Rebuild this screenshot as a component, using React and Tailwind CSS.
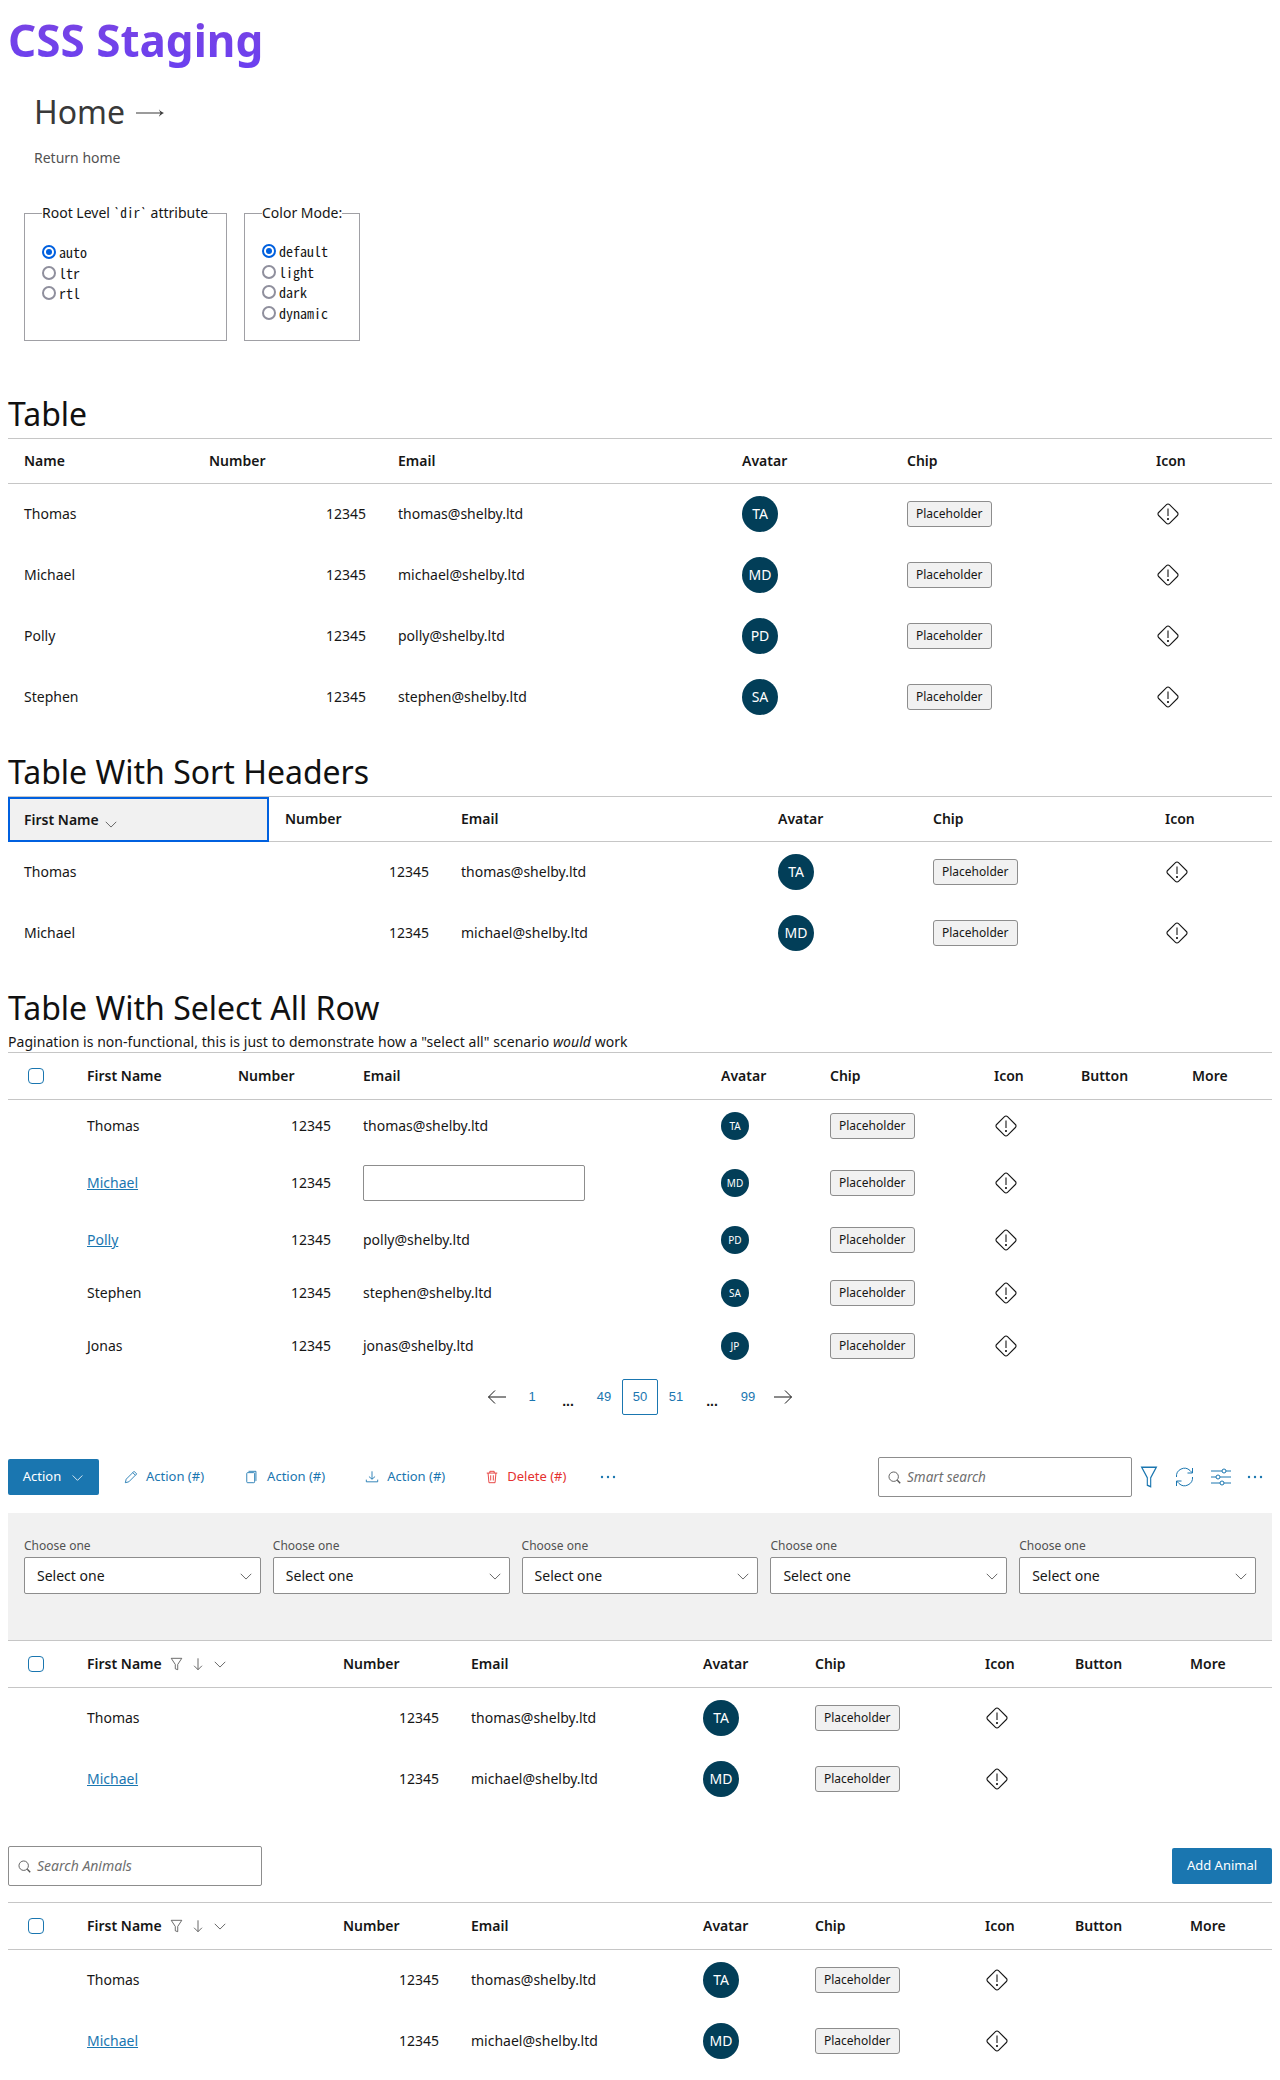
import React from 'react';

const ROWS = [
  { name: 'Thomas', email: 'thomas@shelby.ltd', init: 'TA' },
  { name: 'Michael', email: 'michael@shelby.ltd', init: 'MD' },
  { name: 'Polly', email: 'polly@shelby.ltd', init: 'PD' },
  { name: 'Stephen', email: 'stephen@shelby.ltd', init: 'SA' },
  { name: 'Jonas', email: 'jonas@shelby.ltd', init: 'JP' },
];

function Diamond() {
  return (
    <svg width="22" height="22" viewBox="0 0 22 22" fill="none" stroke="#161616" strokeWidth="1.1" className="block ml-[1px]">
      <path d="M9.5 1.6a2.1 2.1 0 0 1 3 0l7.9 7.9a2.1 2.1 0 0 1 0 3l-7.9 7.9a2.1 2.1 0 0 1-3 0l-7.9-7.9a2.1 2.1 0 0 1 0-3z" />
      <path d="M11 5.5v7.5" />
      <circle cx="11" cy="16" r="0.5" fill="#161616" />
    </svg>
  );
}

function Avatar({ init, small }) {
  return small ? (
    <div className="w-7 h-7 rounded-full bg-[#023e58] text-white text-[10px] flex items-center justify-center">{init}</div>
  ) : (
    <div className="w-9 h-9 rounded-full bg-[#023e58] text-white text-sm flex items-center justify-center">{init}</div>
  );
}

function Chip() {
  return (
    <span className="inline-flex items-center h-[26px] px-2 rounded-[3px] border border-[#8d8d8d] bg-[#f1f1f1] text-xs text-[#161616]">Placeholder</span>
  );
}

function Checkbox() {
  return <div className="w-4 h-4 rounded-[4px] border border-[#1a76b0] bg-white" />;
}

function Chevron({ size = 14, color = '#525252' }) {
  return (
    <svg width={size} height={size} viewBox="0 0 16 16" fill="none" stroke={color} strokeWidth="1" className="inline-block">
      <path d="M2 5.5 8 11.5l6-6" />
    </svg>
  );
}

function Funnel({ width = 14, height = 14, color = '#525252' }) {
  return (
    <svg width={width} height={height} viewBox="0 0 16 16" preserveAspectRatio="none" fill="none" stroke={color} strokeWidth="1" className="inline-block">
      <path d="M1.5 1.5h13L9.5 8.5v6l-3-1V8.5z" />
    </svg>
  );
}

function SearchIcon() {
  return (
    <svg width="13" height="13" viewBox="0 0 16 16" fill="none" stroke="#525252" strokeWidth="1.1" className="shrink-0">
      <circle cx="7" cy="7" r="5.8" />
      <path d="M11.5 11.5l3.5 3.5" strokeWidth="1.7" />
    </svg>
  );
}

function Th({ children, className = 'h-[45px]' }) {
  return <th className={`px-4 text-left text-sm font-semibold text-[#161616] border-b border-[#c6c6c6] ${className}`}>{children}</th>;
}

function Heading({ children }) {
  return <h2 className="text-[32px] leading-[40px] pb-1 text-[#111]">{children}</h2>;
}

function Cell({ children, className = '' }) {
  return <td className={`px-4 pb-[1px] ${className}`}>{children}</td>;
}

function BasicTable({ rows, widths, sort }) {
  return (
    <table className="w-full table-fixed border-t border-[#c6c6c6] border-separate border-spacing-0 text-sm text-[#161616]">
      <colgroup>
        {widths.map((w, i) => <col key={i} style={{ width: w }} />)}
      </colgroup>
      <thead>
        <tr>
          {sort ? (
            <th className="h-[45px] pl-[14px] pr-4 text-left text-sm font-semibold bg-[#f1f1f1] border-2 border-[#0060df]">
              First Name <span className="ml-0.5 relative top-[3px]"><Chevron size={14} /></span>
            </th>
          ) : <Th>Name</Th>}
          <Th>Number</Th>
          <Th>Email</Th>
          <Th>Avatar</Th>
          <Th>Chip</Th>
          <Th>Icon</Th>
        </tr>
      </thead>
      <tbody>
        {rows.map(r => (
          <tr key={r.name} className="h-[61px]">
            <Cell>{r.name}</Cell>
            <Cell className="text-right">12345</Cell>
            <Cell>{r.email}</Cell>
            <Cell><Avatar init={r.init} /></Cell>
            <Cell><Chip /></Cell>
            <Cell><Diamond /></Cell>
          </tr>
        ))}
      </tbody>
    </table>
  );
}

function SelectTable({ widths, rows, filterHead }) {
  return (
    <table className="w-full table-fixed border-t border-[#c6c6c6] border-separate border-spacing-0 text-sm text-[#161616]">
      <colgroup>
        {widths.map((w, i) => <col key={i} style={{ width: w }} />)}
      </colgroup>
      <thead>
        <tr>
          <th className="h-[47px] pl-[20px] border-b border-[#c6c6c6]"><Checkbox /></th>
          <Th className="h-[47px]">
            First Name
            {filterHead && (
              <span className="inline-flex items-center gap-2 ml-2 relative top-[2px]">
                <Funnel width={13} height={14} />
                <svg width="14" height="14" viewBox="0 0 16 16" fill="none" stroke="#525252" strokeWidth="1">
                  <path d="M8 1.5v13M3.5 10 8 14.5 12.5 10" />
                </svg>
                <Chevron size={14} />
              </span>
            )}
          </Th>
          <Th className="h-[47px]">Number</Th>
          <Th className="h-[47px]">Email</Th>
          <Th className="h-[47px]">Avatar</Th>
          <Th className="h-[47px]">Chip</Th>
          <Th className="h-[47px]">Icon</Th>
          <Th className="h-[47px]">Button</Th>
          <Th className="h-[47px]">More</Th>
        </tr>
      </thead>
      <tbody>
        {rows}
      </tbody>
    </table>
  );
}

function LargeRows() {
  return ROWS.slice(0, 2).map((r, i) => (
    <tr key={r.name} className="h-[61px]">
      <td />
      <Cell>{i === 1 ? <a className="text-[#1a76b0] underline">{r.name}</a> : r.name}</Cell>
      <Cell className="text-right">12345</Cell>
      <Cell>{r.email}</Cell>
      <Cell><Avatar init={r.init} /></Cell>
      <Cell><Chip /></Cell>
      <Cell><Diamond /></Cell>
      <Cell />
      <Cell />
    </tr>
  ));
}

const PAGES = ['1', '…', '49', '50', '51', '…', '99'];

function Pagination() {
  return (
    <div className="flex justify-center items-center h-9 font-['Liberation_Sans',sans-serif] text-[13px] text-[#1a76b0] mt-[6px]">
      <svg width="20" height="20" viewBox="0 0 20 20" fill="none" stroke="#161616" strokeWidth="1" className="mr-[7px]">
        <path d="M19 10H1.5M8 3.5 1.5 10 8 16.5" />
      </svg>
      {PAGES.map((p, i) => p === '…' ? (
        <span key={i} className="w-9 text-center text-[#161616] font-bold text-sm relative top-[4px]">...</span>
      ) : (
        <span key={i} className={`w-9 h-9 flex items-center justify-center ${p === '50' ? 'border border-[#1a76b0] rounded-[2px]' : ''}`}>{p}</span>
      ))}
      <svg width="20" height="20" viewBox="0 0 20 20" fill="none" stroke="#161616" strokeWidth="1" className="ml-[7px]">
        <path d="M1 10h17.5M12 3.5 18.5 10 12 16.5" />
      </svg>
    </div>
  );
}

function ActionBtn({ icon, label, danger, className = '' }) {
  return (
    <span className={`inline-flex items-center gap-2 text-[13px] ${danger ? 'text-[#e5312f]' : 'text-[#1a76b0]'} ${className}`}>
      {icon}{label}
    </span>
  );
}

function Dots({ className = '' }) {
  return (
    <svg width="16" height="4" viewBox="0 0 16 4" fill="#1a76b0" className={className}>
      <circle cx="2" cy="2" r="1.2" /><circle cx="8" cy="2" r="1.2" /><circle cx="14" cy="2" r="1.2" />
    </svg>
  );
}

function Toolbar() {
  return (
    <div className="flex items-center h-9 mt-[44px]">
      <div className="w-[91px] h-9 rounded-[2px] bg-[#1a76b0] text-white text-[13px] flex items-center justify-center gap-[10px]">
        Action <Chevron size={13} color="#fff" />
      </div>
      <ActionBtn className="ml-[25px]" label="Action (#)" icon={
        <svg width="14" height="14" viewBox="0 0 16 16" fill="none" stroke="#1a76b0" strokeWidth="1"><path d="M1.5 14.5l1-4L11.5 1.5l3 3-9 9zM10 3l3 3" /></svg>
      } />
      <ActionBtn className="ml-[41px]" label="Action (#)" icon={
        <svg width="14" height="14" viewBox="0 0 16 16" fill="none" stroke="#1a76b0" strokeWidth="1"><rect x="2" y="3" width="9" height="11.5" rx="1" /><path d="M4 1.5h8.5v11" /></svg>
      } />
      <ActionBtn className="ml-[40px]" label="Action (#)" icon={
        <svg width="14" height="14" viewBox="0 0 16 16" fill="none" stroke="#1a76b0" strokeWidth="1"><path d="M8 1.5v9M4.5 7.5 8 10.5l3.5-3M1.5 11v2.5h13V11" /></svg>
      } />
      <ActionBtn className="ml-[40px]" danger label="Delete (#)" icon={
        <svg width="14" height="14" viewBox="0 0 16 16" fill="none" stroke="#e5312f" strokeWidth="1"><path d="M2 3.5h12M5.5 3.5V1.5h5v2M3.5 3.5l1 11h7l1-11M6.5 6v6M9.5 6v6" /></svg>
      } />
      <Dots className="ml-[34px]" />
      <div className="ml-auto flex items-center gap-4 pr-[9px]">
        <div className="w-[254px] h-[40px] border border-[#8d8d8d] rounded-[2px] flex items-center gap-[6px] px-[9px] text-[13.5px] italic text-[#6f6f6f]">
          <SearchIcon /> Smart search
        </div>
        <span className="-ml-[8px] flex"><Funnel width={18} height={24} color="#1a76b0" /></span>
        <svg width="21" height="24" viewBox="0 0 20 24" fill="none" stroke="#1a76b0" strokeWidth="1">
          <path d="M2 12a8 8 0 0 1 13.5-6.5L18 8M18 3v5h-5M18 12a8 8 0 0 1-13.5 6.5L2 16M2 21v-5h5" />
        </svg>
        <svg width="20" height="20" viewBox="0 0 20 20" fill="none" stroke="#1a76b0" strokeWidth="1">
          <path d="M0 4h20M0 10h20M0 16h20" />
          <circle cx="13" cy="4" r="2" fill="#fff" />
          <circle cx="7" cy="10" r="2" fill="#fff" />
          <circle cx="11" cy="16" r="2" fill="#fff" />
        </svg>
        <Dots />
      </div>
    </div>
  );
}

function FilterPanel() {
  return (
    <div className="mt-[18px] h-[127px] bg-[#f1f1f1] px-4 pt-[25px] grid grid-cols-5 gap-3">
      {[0, 1, 2, 3, 4].map(i => (
        <div key={i}>
          <div className="text-xs leading-4 text-[#525252] mb-[3px]">Choose one</div>
          <div className="h-[37px] bg-white border border-[#8d8d8d] rounded-[2px] flex items-center justify-between pl-3 pr-[7px] text-sm text-[#161616]">
            Select one <Chevron size={14} />
          </div>
        </div>
      ))}
    </div>
  );
}

function Radios({ options, top }) {
  return (
    <div className={`${top} flex flex-col font-['Noto_Sans_Mono_CJK_SC',monospace] text-[14px] leading-[20.5px] text-[#161616]`}>
      {options.map((o, i) => (
        <label key={o} className="flex items-center gap-[3px]">
          {i === 0 ? (
            <span className="w-[14px] h-[14px] rounded-full bg-white border-2 border-[#0060df] flex items-center justify-center">
              <span className="w-[6px] h-[6px] rounded-full bg-[#0060df]" />
            </span>
          ) : (
            <span className="w-[14px] h-[14px] rounded-full bg-white border-2 border-[#8f8f9d]" />
          )}
          {o}
        </label>
      ))}
    </div>
  );
}

export default function App() {
  const smallWidths = [63, 151, 125, 358, 109, 164, 87, 111, 96];
  const filterWidths = [63, 256, 128, 232, 112, 170, 90, 115, 98];

  return (
    <div className="w-[1280px] font-['Noto_Sans',sans-serif] bg-white px-2">
      <h1 className="text-[44px] leading-[60px] font-bold pt-[10px] text-transparent bg-clip-text bg-gradient-to-b from-[#7e45e0] to-[#6a3ff0] w-fit">CSS Staging</h1>
      <div className="pl-[26px] mt-[20px]">
        <div className="flex items-center text-[32px] leading-[44px] text-[#393939]">
          Home
          <svg width="28" height="10" viewBox="0 0 28 10" fill="#393939" className="ml-[11px] mt-[2px]">
            <path d="M0 4.5h24.5c-.7-.9-1.3-2-1.6-3.3 1.2 1.6 3 2.9 5.1 3.8-2.1.9-3.9 2.2-5.1 3.8.3-1.3.9-2.4 1.6-3.3H0z" />
          </svg>
        </div>
        <p className="text-sm leading-5 text-[#525252] mt-[14px]">Return home</p>
      </div>

      <div className="flex gap-[17px] ml-4 mt-[35px] h-[138px]">
        <fieldset className="w-[203px] border border-[#a0a0a5] px-[17px] pb-4">
          <legend className="text-sm leading-5 text-[#161616] whitespace-nowrap">Root Level <span className="font-['Noto_Sans_Mono_CJK_SC',monospace] text-[13.33px]">`dir`</span> attribute</legend>
          <Radios options={['auto', 'ltr', 'rtl']} top="mt-[19px]" />
        </fieldset>
        <fieldset className="w-[115px] border border-[#a0a0a5] px-[17px] pb-4">
          <legend className="text-sm leading-5 text-[#161616] whitespace-nowrap">Color Mode:</legend>
          <Radios options={['default', 'light', 'dark', 'dynamic']} top="mt-[18px]" />
        </fieldset>
      </div>

      <div className="mt-[53px]"><Heading>Table</Heading></div>
      <BasicTable rows={ROWS.slice(0, 4)} widths={[185, 189, 344, 165, 249, 132]} />

      <div className="mt-[24px]"><Heading>Table With Sort Headers</Heading></div>
      <BasicTable rows={ROWS.slice(0, 2)} widths={[261, 176, 317, 155, 232, 123]} sort />

      <div className="mt-[24px]"><Heading>Table With Select All Row</Heading></div>
      <p className="text-sm leading-5 text-[#161616] tracking-[0.05px]">Pagination is non-functional, this is just to demonstrate how a "select all" scenario <em>would</em> work</p>
      <SelectTable widths={smallWidths} rows={ROWS.map((r, i) => (
        <tr key={r.name} className={i === 1 ? 'h-[61px]' : 'h-[53px]'}>
          <td />
          <Cell>{i === 1 || i === 2 ? <a className="text-[#1a76b0] underline">{r.name}</a> : r.name}</Cell>
          <Cell className="text-right">12345</Cell>
          <Cell>{i === 1 ? <div className="w-[222px] h-9 border border-[#8d8d8d] rounded-[2px] bg-white" /> : r.email}</Cell>
          <Cell><Avatar init={r.init} small /></Cell>
          <Cell><Chip /></Cell>
          <Cell><Diamond /></Cell>
          <Cell />
          <Cell />
        </tr>
      ))} />
      <Pagination />
      <Toolbar />
      <FilterPanel />
      <SelectTable widths={filterWidths} rows={<LargeRows />} filterHead />

      <div className="flex items-center justify-between mt-[36px]">
        <div className="w-[254px] h-[40px] border border-[#8d8d8d] rounded-[2px] flex items-center gap-[6px] px-[9px] text-sm italic text-[#6f6f6f]">
          <SearchIcon /> Search Animals
        </div>
        <div className="w-[100px] h-9 rounded-[2px] bg-[#1a76b0] text-white text-[13px] flex items-center justify-center">Add Animal</div>
      </div>
      <div className="mt-4">
        <SelectTable widths={filterWidths} rows={<LargeRows />} filterHead />
      </div>
    </div>
  );
}
